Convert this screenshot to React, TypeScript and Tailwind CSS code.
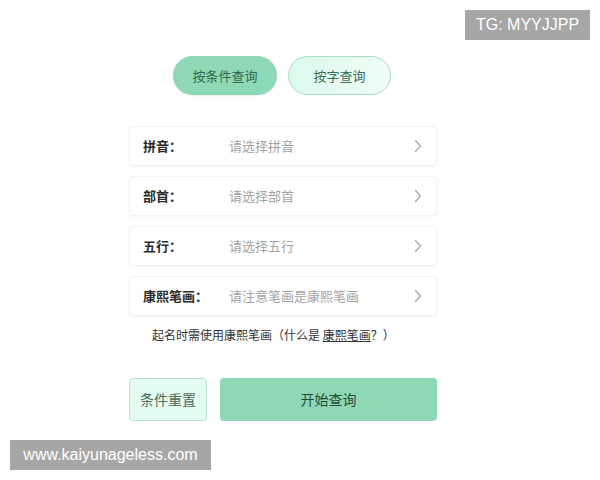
import React from 'react';

const rows = [
  { label: '拼音：', hint: '请选择拼音' },
  { label: '部首：', hint: '请选择部首' },
  { label: '五行：', hint: '请选择五行' },
  { label: '康熙笔画：', hint: '请注意笔画是康熙笔画' },
];

function Chevron() {
  return (
    <svg width="8" height="14" viewBox="0 0 8 14" fill="none">
      <path d="M1.5 1.5 L6.5 7 L1.5 12.5" stroke="#a8a8a8" strokeWidth="1.3" strokeLinecap="round" strokeLinejoin="round" />
    </svg>
  );
}

export default function App() {
  return (
    <div
      className="relative w-[600px] h-[480px] bg-white overflow-hidden"
      style={{ fontFamily: '"Noto Sans CJK SC", "Noto Sans", sans-serif' }}
    >
      <div className="flex flex-col pl-[129px] pt-[56px] w-[437px]">
        {/* tabs */}
        <div className="flex gap-[11px] ml-[44px]">
          <div className="w-[104px] h-[39px] rounded-full bg-[#8fd8b5] flex items-center justify-center text-[13px] text-[#2f6a4e] shadow-[0_1px_2px_rgba(0,0,0,0.08)]">
            按条件查询
          </div>
          <div className="w-[103px] h-[39px] rounded-full bg-gradient-to-r from-[#dcf8ec] to-[#effdf7] border border-[#a9dcc4] flex items-center justify-center text-[13px] text-[#3b6f57]">
            按字查询
          </div>
        </div>

        {/* fields */}
        <div className="flex flex-col gap-[10px] mt-[31px]">
          {rows.map((r) => (
            <div
              key={r.label}
              className="h-[40px] flex items-center border border-[#f1f1f1] rounded-[3px] shadow-[0_1px_2px_rgba(0,0,0,0.03)] pl-[13px] pr-[14px]"
            >
              <span className="w-[86px] text-[13px] font-bold text-[#2b2b2b]">{r.label}</span>
              <span className="flex-1 text-[13px] text-[#a3a3a3]">{r.hint}</span>
              <Chevron />
            </div>
          ))}
        </div>

        <p className="mt-[10px] ml-[23px] text-[12px] text-[#333]">
          起名时需使用康熙笔画（什么是 <span className="underline">康熙笔画</span>？）
        </p>

        {/* actions */}
        <div className="flex gap-[13px] mt-[34px]">
          <div className="w-[78px] h-[43px] rounded-[4px] bg-[#e4fbf2] border border-[#b5e2cd] flex items-center justify-center text-[14px] text-[#4d6a5c]">
            条件重置
          </div>
          <div className="flex-1 h-[43px] rounded-[4px] bg-[#8fd8b5] flex items-center justify-center text-[14px] text-[#264a39]">
            开始查询
          </div>
        </div>
      </div>

      {/* watermarks */}
      <div
        className="absolute left-[465px] top-[10px] w-[125px] h-[30px] bg-[#a6a6a6] text-white text-[16px] flex items-center justify-center"
        style={{ fontFamily: '"Liberation Sans", Arial, sans-serif' }}
      >
        TG: MYYJJPP
      </div>
      <div
        className="absolute left-[10px] top-[440px] w-[201px] h-[30px] bg-[#a6a6a6] text-white text-[16px] flex items-center justify-center"
        style={{ fontFamily: '"Liberation Sans", Arial, sans-serif' }}
      >
        www.kaiyunageless.com
      </div>
    </div>
  );
}
